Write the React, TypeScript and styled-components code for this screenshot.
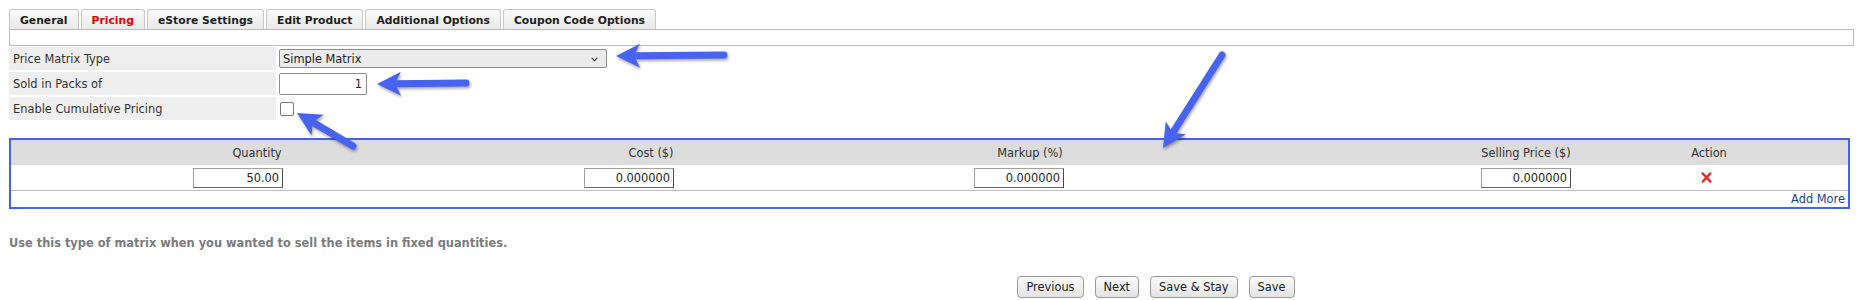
import React from "react"
import styled, { createGlobalStyle } from "styled-components"

const TABS = ["General", "Pricing", "eStore Settings", "Edit Product", "Additional Options", "Coupon Code Options"]

type Col = { title: string; value?: string; nudge: number; action?: boolean }

const COLUMNS: Col[] = [
  { title: "Quantity", value: "50.00", nudge: 38 },
  { title: "Cost ($)", value: "0.000000", nudge: 44 },
  { title: "Markup (%)", value: "0.000000", nudge: 22 },
  { title: "Selling Price ($)", value: "0.000000", nudge: 0 },
  { title: "Action", nudge: 6, action: true },
]

// annotation arrows drawn on top of the screenshot
const ARROWS: [number, number, number, number][] = [
  [724, 55, 616, 56],
  [466, 83, 377, 84],
  [353, 146, 297, 113],
  [1222, 55, 1163, 148],
]

const Arrow: React.FC<{ a: [number, number, number, number] }> = ({ a }) => {
  const [x1, y1, x2, y2] = a
  const dx = x2 - x1
  const dy = y2 - y1
  const len = Math.hypot(dx, dy)
  const ux = dx / len
  const uy = dy / len
  const nx = -uy
  const ny = ux
  const headLen = 22
  const headW = 12
  const bx = x2 - ux * headLen
  const by = y2 - uy * headLen
  const pts = [
    [x2, y2],
    [bx + nx * headW - ux * 2, by + ny * headW - uy * 2],
    [bx + ux * 4, by + uy * 4],
    [bx - nx * headW - ux * 2, by - ny * headW - uy * 2],
  ]
    .map(p => p.join(","))
    .join(" ")
  return (
    <g>
      <line x1={x1} y1={y1} x2={bx + ux * 4} y2={by + uy * 4} stroke="#4862f2" strokeWidth={7} strokeLinecap="round" />
      <polygon points={pts} fill="#4862f2" />
    </g>
  )
}

const App: React.FC = () => {
  return (
    <Page>
      <GlobalStyle />
      <TabBar>
        {TABS.map(t => (
          <Tab key={t} $active={t === "Pricing"}>
            {t}
          </Tab>
        ))}
      </TabBar>
      <Strip />

      <Form>
        <Label>Price Matrix Type</Label>
        <Value>
          <SelectWrap>
            <Select defaultValue="simple">
              <option value="simple">Simple Matrix</option>
            </Select>
            <Chevron width="7" height="5" viewBox="0 0 7 5">
              <polyline points="0.7,0.8 3.5,3.8 6.3,0.8" fill="none" stroke="#333" strokeWidth="1.1" />
            </Chevron>
          </SelectWrap>
        </Value>
        <Label>Sold in Packs of</Label>
        <Value>
          <PackInput defaultValue="1" />
        </Value>
        <Label>Enable Cumulative Pricing</Label>
        <Value>
          <Check type="checkbox" />
        </Value>
      </Form>

      <Matrix>
        <HeadRow>
          {COLUMNS.map((c, i) => (
            <HeadCell key={c.title} style={{ gridColumn: colOf(i) }}>
              {c.title}
            </HeadCell>
          ))}
        </HeadRow>
        <BodyRow>
          {COLUMNS.map((c, i) => (
            <BodyCell key={c.title} $nudge={c.nudge} style={{ gridColumn: colOf(i) }}>
              {c.action ? (
                <svg width="11" height="11" viewBox="0 0 11 11">
                  <path d="M1.6 1.4 L9.4 9.6 M9.2 1.4 L1.8 9.6" stroke="#e3261f" strokeWidth="2.3" strokeLinecap="round" />
                </svg>
              ) : (
                <NumInput defaultValue={c.value} />
              )}
            </BodyCell>
          ))}
        </BodyRow>
        <AddRow>
          <AddLink>Add More</AddLink>
        </AddRow>
      </Matrix>

      <Hint>Use this type of matrix when you wanted to sell the items in fixed quantities.</Hint>

      <Footer>
        <Button>Previous</Button>
        <Button>Next</Button>
        <Button>Save &amp; Stay</Button>
        <Button>Save</Button>
      </Footer>

      <Overlay width="1865" height="300" viewBox="0 0 1865 300">
        {ARROWS.map((a, i) => (
          <Arrow key={i} a={a} />
        ))}
      </Overlay>
    </Page>
  )
}

// grid column index for each matrix column (col 4 is a spacer)
const colOf = (i: number) => (i < 3 ? i + 1 : i + 2)

export default App

const GlobalStyle = createGlobalStyle`
  html, body {
    margin: 0;
    padding: 0;
    background: #fff;
  }
  body {
    font-family: "DejaVu Sans", Verdana, sans-serif;
    font-size: 11.4px;
    color: #333;
  }
  * { box-sizing: border-box; }
`

const Page = styled.div`
  position: relative;
  width: 1865px;
  height: 300px;
  overflow: hidden;
  padding: 9px 0 0 9px;
  display: flex;
  flex-direction: column;
`

const TabBar = styled.div`
  display: flex;
  gap: 2px;
  height: 20px;
`

const Tab = styled.div<{ $active?: boolean }>`
  display: flex;
  align-items: center;
  padding: 1px 10px 0;
  border: 1px solid #c8c8c8;
  border-bottom: none;
  border-radius: 3px 3px 0 0;
  background: linear-gradient(#fafafa, #e9e9e9);
  font-weight: bold;
  font-size: 10.8px;
  color: ${p => (p.$active ? "#e00000" : "#1e1e1e")};
`

const Strip = styled.div`
  width: 1845px;
  height: 17px;
  border: 1px solid #bcbcbc;
  background: #fff;
`

const Form = styled.div`
  display: grid;
  grid-template-columns: 267px 1fr;
  grid-auto-rows: 23px;
  row-gap: 2px;
  margin-top: 1px;
`

const Label = styled.div`
  display: flex;
  align-items: center;
  padding-left: 4px;
  background: #eeeeee;
  color: #333;
`

const Value = styled.div`
  display: flex;
  align-items: center;
  padding-left: 3px;
`

const SelectWrap = styled.div`
  position: relative;
  width: 328px;
  height: 19px;
`

const Select = styled.select`
  appearance: none;
  width: 100%;
  height: 100%;
  margin: 0;
  padding: 0 0 0 3px;
  border: 1px solid #8a8a8a;
  border-radius: 2px;
  background: #ebebeb;
  font: inherit;
  color: #222;
  outline: none;
`

const Chevron = styled.svg`
  position: absolute;
  right: 9px;
  top: 8px;
  pointer-events: none;
`

const PackInput = styled.input`
  width: 88px;
  height: 22px;
  margin: 0;
  padding: 0 4px;
  border: 1px solid #8f8f8f;
  border-radius: 2px;
  text-align: right;
  font: inherit;
  color: #222;
  outline: none;
`

const Check = styled.input`
  appearance: none;
  width: 14px;
  height: 14px;
  margin: 1px 0 0 1px;
  border: 1.5px solid #7a7a7a;
  border-radius: 2px;
  background: #fff;
`

const Matrix = styled.div`
  width: 1841px;
  margin-top: 18px;
  border: 2px solid #4564e4;
  display: flex;
  flex-direction: column;
`

const cols = `492px 296px 462px 139px 252px 114px 1fr`

const HeadRow = styled.div`
  display: grid;
  grid-template-columns: ${cols};
  height: 25px;
  background: #dcdcdc;
`

const HeadCell = styled.div`
  display: flex;
  align-items: center;
  justify-content: center;
  color: #333;
`

const BodyRow = styled.div`
  display: grid;
  grid-template-columns: ${cols};
  height: 26px;
  border-bottom: 1px solid #bdbdbd;
`

const BodyCell = styled.div<{ $nudge: number }>`
  display: flex;
  align-items: center;
  justify-content: center;
  padding-right: ${p => p.$nudge}px;
`

const NumInput = styled.input`
  width: 90px;
  height: 20px;
  margin: 0;
  padding: 0 3px;
  border: 1px solid #a0a0a0;
  border-right-color: #4a4a4a;
  border-bottom-color: #6a6a6a;
  text-align: right;
  font: inherit;
  color: #222;
  outline: none;
`

const AddRow = styled.div`
  display: flex;
  justify-content: flex-end;
  align-items: center;
  height: 16px;
  padding-right: 3px;
`

const AddLink = styled.a`
  color: #1d3f85;
  cursor: pointer;
`

const Hint = styled.div`
  margin-top: 27px;
  font-weight: bold;
  font-size: 11.4px;
  color: #7b7b7b;
`

const Footer = styled.div`
  display: flex;
  justify-content: center;
  gap: 11px;
  margin-top: 26px;
  padding-left: 438px;
`

const Button = styled.button`
  height: 22px;
  padding: 0 8px;
  border: 1px solid #9a9a9a;
  border-radius: 4px;
  background: linear-gradient(#fbfbfb, #e3e3e3);
  font: inherit;
  color: #222;
  cursor: pointer;
`

const Overlay = styled.svg`
  position: absolute;
  left: 0;
  top: 0;
  pointer-events: none;
  filter: drop-shadow(1px 2px 1.5px rgba(0, 0, 0, 0.35));
`
